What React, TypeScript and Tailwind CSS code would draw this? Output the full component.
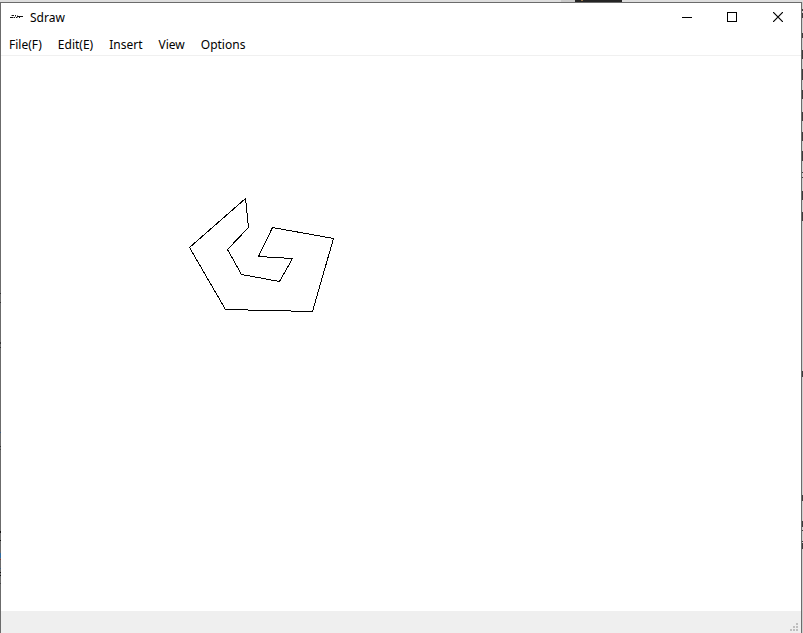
import React from "react";

const menus = ["File(F)", "Edit(E)", "Insert", "View", "Options"];

// y position and height of the dark fragments visible at the right of the window
const rightFragments = [
  [7, 2], [11, 5], [31, 5], [48, 9], [67, 11], [88, 9], [110, 9], [130, 9],
  [149, 10], [170, 1], [175, 1], [189, 9], [210, 9], [369, 6], [493, 6],
  [519, 6], [528, 1], [539, 1], [541, 6],
];

// y position, height and colour of the marks along the left border
const leftFragments: [number, number, string][] = [
  [291, 1, "#333"], [300, 1, "#333"], [340, 2, "#333"], [345, 1, "#333"],
  [430, 1, "#3b5f85"], [444, 1, "#333"], [447, 1, "#444"], [529, 2, "#111"],
  [538, 1, "#111"], [551, 5, "#2f6ba0"], [557, 1, "#8a3838"], [566, 1, "#3b5f85"],
  [570, 1, "#111"], [573, 1, "#111"], [581, 1, "#444"],
];

function Backdrop() {
  return (
    <svg aria-hidden="true" className="absolute inset-0 h-full w-full" shapeRendering="crispEdges">
      <rect x="561" y="0" width="14" height="2" fill="#c9c9c9" />
      <rect x="575" y="0" width="47" height="2" fill="#242424" />
      <rect x="581" y="0" width="2" height="1" fill="#96774a" />
    </svg>
  );
}

function AppIcon() {
  return (
    <svg aria-hidden="true" width="16" height="16" viewBox="0 0 16 16" shapeRendering="crispEdges" className="shrink-0">
      <path d="M3 6h2v1H3zM6 6h1v1H6zM8 7h3v1H8zM11 7h3v1h-3zM1 8h3v1H1zM5 8h1v1H5zM7 8h1v1H7zM10 8h1v1h-1z" fill="#111" />
      <path d="M2 6h1v1H2zM4 8h1v1H4zM8 8h1v1H8zM6 7h1v1H6zM8 6h1v1H8z" fill="#999" />
    </svg>
  );
}

function TitleBar() {
  return (
    <header className="flex h-7 shrink-0 items-center pl-2">
      <AppIcon />
      <h1 className="ml-[5px] flex-1 pt-[2px] text-[12px] leading-5">Sdraw</h1>
      <div className="flex">
        <button type="button" aria-label="Minimize" className="flex h-7 w-11 items-center justify-center">
          <svg width="10" height="10" shapeRendering="crispEdges"><path d="M0 5h10v1H0z" /></svg>
        </button>
        <button type="button" aria-label="Maximize" className="flex h-7 w-[46px] items-center justify-center">
          <svg width="10" height="10" shapeRendering="crispEdges"><path d="M0 0h10v10H0zM1 1v8h8V1z" fillRule="evenodd" /></svg>
        </button>
        <button type="button" aria-label="Close" className="flex h-7 w-[46px] items-center justify-center">
          <svg width="10" height="10" viewBox="0 0 10 10"><path d="M0 0L10 10M10 0L0 10" stroke="#000" strokeWidth="1.2" /></svg>
        </button>
      </div>
    </header>
  );
}

export default function App() {
  return (
    <div className="relative flex h-screen overflow-hidden bg-[#dedede] pt-[2px] font-['Noto_Sans',sans-serif] text-black">
      <Backdrop />
      <div className="relative flex w-px shrink-0 flex-col bg-[#6b6b6b]">
        <svg aria-hidden="true" className="w-full flex-1" shapeRendering="crispEdges">
          {leftFragments.map(([y, h, fill]) => (
            <rect key={y} x="0" y={y} width="1" height={h} fill={fill} />
          ))}
        </svg>
      </div>
      <div className="relative flex min-w-0 flex-1 flex-col border-t border-r border-[#6b6b6b] bg-white">
        <TitleBar />
        <nav aria-label="Main menu" className="flex h-[25px] shrink-0 items-center border-b border-[#f0f0f0] pt-1">
          {menus.map((m) => (
            <button key={m} type="button" className="px-2 text-[12px] leading-5">{m}</button>
          ))}
        </nav>
        <main className="min-h-0 flex-1">
          <svg role="img" aria-label="Drawing canvas" className="h-full w-full" shapeRendering="crispEdges">
            <path
              transform="translate(-1 -56)"
              d="M245.500 198.500L248.500 227.500L227.500 249.500L241.500 274.500L279.500 281.500L292.500 258.500L258.500 256.500L272.500 227.500L333.500 238.500L312.500 311.500L225.500 309.500L189.500 247.500Z"
              fill="none"
              stroke="#000"
              strokeWidth="1"
            />
          </svg>
        </main>
        <footer className="flex h-[22px] shrink-0 items-end justify-end bg-[#efefef] pr-[3px] pb-[2px]">
          <svg aria-hidden="true" width="8" height="8" fill="#bfbfbf" shapeRendering="crispEdges">
            <path d="M6 0h2v2H6zM3 3h2v2H3zM6 3h2v2H6zM0 6h2v2H0zM3 6h2v2H3zM6 6h2v2H6z" />
          </svg>
        </footer>
      </div>
      <div className="relative flex w-px shrink-0 flex-col bg-[#cfcfcf]">
        <svg aria-hidden="true" className="w-full flex-1" shapeRendering="crispEdges">
          {rightFragments.map(([y, h]) => (
            <rect key={y} x="0" y={y} width="1" height={h} fill="#3c3c3c" />
          ))}
        </svg>
      </div>
    </div>
  );
}
